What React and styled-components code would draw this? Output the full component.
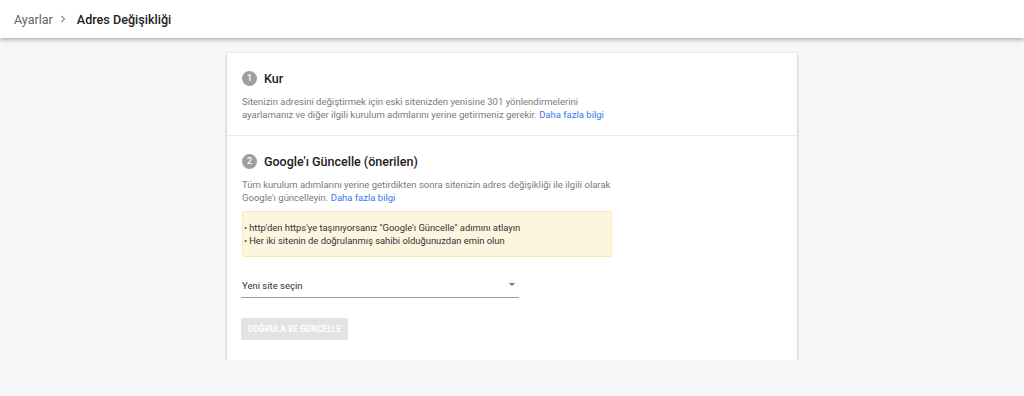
import React from "react";
import styled, { createGlobalStyle } from "styled-components";

const Global = createGlobalStyle`
  html, body { margin: 0; padding: 0; }
  body {
    background: #f7f7f7;
    font-family: Roboto, "Noto Sans", Arial, sans-serif;
    -webkit-font-smoothing: antialiased;
  }
`;

const Header = styled.header`
  height: 38px;
  background: #fff;
  box-shadow: 0 2px 4px rgba(0, 0, 0, 0.28);
  display: flex;
  align-items: center;
  padding-left: 14px;
  position: relative;
  z-index: 1;
`;

const Crumb = styled.span`
  font-size: ${(p) => (p.$current ? 12.6 : 12.5)}px;
  color: ${(p) => (p.$current ? "#212121" : "#5f6368")};
  font-weight: ${(p) => (p.$current ? 500 : 400)};
`;

const Chevron = styled.svg`
  display: block;
  width: 8px;
  height: 10px;
  margin: 0 10px 0 6px;
  flex: none;
`;

const Main = styled.main`
  display: flex;
  justify-content: center;
  padding-top: 15px;
`;

const Card = styled.div`
  width: 570px;
  background: #fff;
  box-shadow: 0 1px 3px rgba(0, 0, 0, 0.28), 0 0 1px rgba(0, 0, 0, 0.08);
`;

const Section = styled.section`
  padding: 16px 15px ${(p) => p.$pb || 14}px;
  border-bottom: ${(p) => (p.$divider ? "1px solid #ebebeb" : "none")};
`;

const TitleRow = styled.div`
  display: flex;
  align-items: center;
  height: 18px;
  margin-bottom: 8px;
`;

const Badge = styled.span`
  width: 15px;
  height: 15px;
  border-radius: 50%;
  background: #9e9e9e;
  color: #fff;
  font-size: 9px;
  font-weight: 500;
  display: flex;
  align-items: center;
  justify-content: center;
  margin-right: 7px;
`;

const Title = styled.h2`
  margin: 0;
  font-size: 12.5px;
  font-weight: 500;
  color: #212121;
`;

const Desc = styled.p`
  margin: 0;
  max-width: 372px;
  font-size: 9.5px;
  line-height: 13px;
  color: #7a7a7a;
`;

const Link = styled.a`
  color: #3b78e7;
  text-decoration: none;
`;

const Warning = styled.ul`
  margin: 7px 0 0;
  width: 370px;
  box-sizing: border-box;
  list-style: none;
  padding: 9px 8px 9px 1px;
  background: #fef5df;
  border: 1px solid #fce8b2;
  border-radius: 2px;
`;

const WarnItem = styled.li`
  font-size: 9.4px;
  line-height: 13px;
  color: #333;
  &::before {
    content: "•";
    margin-right: 2px;
    color: #555;
  }
`;

const Select = styled.div`
  margin-top: 22px;
  width: 278px;
  display: flex;
  align-items: center;
  justify-content: space-between;
  border-bottom: 1px solid #9e9e9e;
  padding: 0 0 5px 0;
  box-sizing: border-box;
  margin-left: -1px;
`;

const SelectLabel = styled.span`
  font-size: 9.5px;
  line-height: 13px;
  color: #333;
  padding-left: 1px;
`;

const Caret = styled.span`
  width: 0;
  height: 0;
  border-left: 3.5px solid transparent;
  border-right: 3.5px solid transparent;
  border-top: 3.5px solid #757575;
  margin-right: 4px;
  margin-top: -2px;
`;

const Button = styled.button`
  display: block;
  margin-top: 20px;
  margin-left: -1px;
  height: 22px;
  width: 107px;
  border: none;
  border-radius: 2px;
  background: #e3e3e3;
  color: #fff;
  font-family: inherit;
  font-size: 8.2px;
  font-weight: 700;
  letter-spacing: 0.1px;
  text-transform: uppercase;
  padding: 0;
  cursor: default;
`;

export default function App() {
  return (
    <>
      <Global />
      <Header>
        <Crumb>Ayarlar</Crumb>
        <Chevron viewBox="0 0 8 10">
          <path d="M2.5 2 L5.5 5 L2.5 8" fill="none" stroke="#8a8a8a" strokeWidth="1.1" />
        </Chevron>
        <Crumb $current>Adres Değişikliği</Crumb>
      </Header>
      <Main>
        <Card>
          <Section $divider>
            <TitleRow>
              <Badge>1</Badge>
              <Title>Kur</Title>
            </TitleRow>
            <Desc>
              Sitenizin adresini değiştirmek için eski sitenizden yenisine 301 yönlendirmelerini
              ayarlamanız ve diğer ilgili kurulum adımlarını yerine getirmeniz gerekir.{" "}
              <Link href="#">Daha fazla bilgi</Link>
            </Desc>
          </Section>
          <Section $pb={20}>
            <TitleRow>
              <Badge>2</Badge>
              <Title>Google'ı Güncelle (önerilen)</Title>
            </TitleRow>
            <Desc>
              Tüm kurulum adımlarını yerine getirdikten sonra sitenizin adres değişikliği ile ilgili olarak
              Google'ı güncelleyin. <Link href="#">Daha fazla bilgi</Link>
            </Desc>
            <Warning>
              <WarnItem>http'den https'ye taşınıyorsanız "Google'ı Güncelle" adımını atlayın</WarnItem>
              <WarnItem>Her iki sitenin de doğrulanmış sahibi olduğunuzdan emin olun</WarnItem>
            </Warning>
            <Select>
              <SelectLabel>Yeni site seçin</SelectLabel>
              <Caret />
            </Select>
            <Button disabled>Doğrula ve Güncelle</Button>
          </Section>
        </Card>
      </Main>
    </>
  );
}
